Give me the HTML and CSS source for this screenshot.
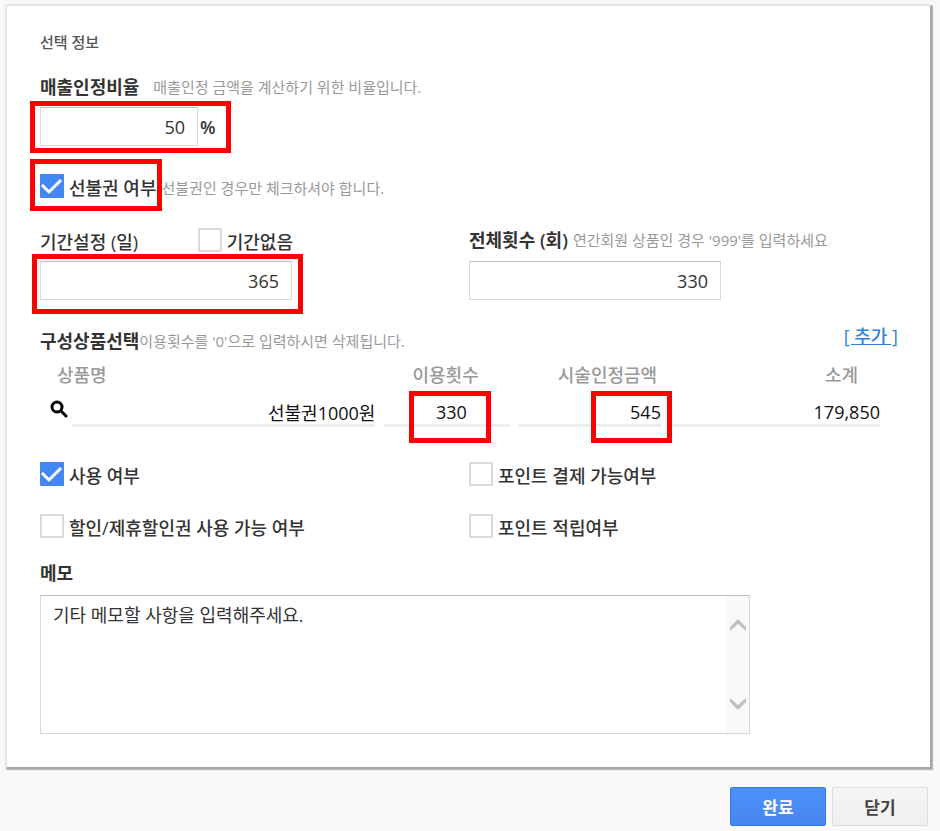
FILE: index.html
```html
<!DOCTYPE html>
<html lang="ko">
<head>
    <meta charset="UTF-8">
    <meta name="viewport" content="width=device-width, initial-scale=1.0">
    <title>선택 정보</title>
    <link rel="stylesheet" href="styles.css">
</head>
<body>
    <form class="panel" id="product-form">
        <h2>선택 정보</h2>

        <div class="label-row">
            <label for="rate">매출인정비율</label>
            <span class="hint hint-spaced">매출인정 금액을 계산하기 위한 비율입니다.</span>
        </div>
        <div class="rate-field mark mark-rate">
            <input type="text" id="rate" class="text-input" value="50">
            <span>%</span>
        </div>

        <div class="check-row">
            <label class="check mark mark-prepaid"><input type="checkbox" checked>선불권 여부</label>
            <span class="hint">선불권인 경우만 체크하셔야 합니다.</span>
        </div>

        <div class="columns">
            <div class="period">
                <div class="label-row period-row">
                    <label for="period">기간설정 (일)</label>
                    <label class="check"><input type="checkbox">기간없음</label>
                </div>
                <div class="period-field mark mark-period">
                    <input type="text" id="period" class="text-input" value="365">
                </div>
            </div>
            <div class="total">
                <div class="label-row">
                    <label for="total">전체횟수 (회)</label>
                    <span class="hint">연간회원 상품인 경우 '999'를 입력하세요</span>
                </div>
                <input type="text" id="total" class="text-input" value="330">
            </div>
        </div>

        <div class="products-head">
            <h3>구성상품선택</h3>
            <span class="hint">이용횟수를 '0'으로 입력하시면 삭제됩니다.</span>
            <a href="#" class="add-link">[ 추가 ]</a>
        </div>
        <table class="products">
            <colgroup>
                <col class="col-name">
                <col class="col-count">
                <col class="col-price">
                <col class="col-sum">
            </colgroup>
            <thead>
                <tr>
                    <th class="th-name">상품명</th>
                    <th class="th-count">이용횟수</th>
                    <th class="th-price">시술인정금액</th>
                    <th class="th-sum">소계</th>
                </tr>
            </thead>
            <tbody>
                <tr>
                    <td>
                        <div class="name-cell">
                            <button type="button" class="search-button" aria-label="상품 검색">
                                <svg viewBox="0 0 18 18" width="18" height="18">
                                    <circle cx="7" cy="7" r="5" fill="none" stroke="#000" stroke-width="3"/>
                                    <path d="M11 11L16 16" stroke="#000" stroke-width="3" stroke-linecap="round"/>
                                </svg>
                            </button>
                            <input type="text" class="line-input" aria-label="상품명" value="선불권1000원">
                        </div>
                    </td>
                    <td>
                        <div class="mark mark-count">
                            <input type="text" class="line-input count-input" aria-label="이용횟수" value="330">
                        </div>
                    </td>
                    <td>
                        <div class="mark mark-price">
                            <input type="text" class="line-input" aria-label="시술인정금액" value="545">
                        </div>
                    </td>
                    <td class="td-sum">
                        <input type="text" class="line-input" aria-label="소계" value="179,850" readonly>
                    </td>
                </tr>
            </tbody>
        </table>

        <div class="options">
            <label class="check"><input type="checkbox" checked>사용 여부</label>
            <label class="check"><input type="checkbox">포인트 결제 가능여부</label>
            <label class="check"><input type="checkbox">할인/제휴할인권 사용 가능 여부</label>
            <label class="check"><input type="checkbox">포인트 적립여부</label>
        </div>

        <div class="label-row">
            <label for="memo">메모</label>
        </div>
        <div class="memo-box">
            <textarea id="memo">기타 메모할 사항을 입력해주세요.</textarea>
            <div class="memo-scroll">
                <svg viewBox="0 0 16 12" width="16" height="12"><path d="M0 8L8 0L16 8V12L8 5L0 12Z" fill="#c1c1c1"/></svg>
                <svg viewBox="0 0 16 12" width="16" height="12"><path d="M0 4L8 12L16 4V0L8 7L0 0Z" fill="#c1c1c1"/></svg>
            </div>
        </div>
    </form>

    <div class="actions">
        <button type="submit" form="product-form" class="button button-primary">완료</button>
        <button type="button" class="button">닫기</button>
    </div>
</body>
</html>
```
FILE: styles.css
```css
* {
    box-sizing: border-box;
}

body {
    margin: 0;
    padding: 5px 8px 0 6px;
    background: #f9f9f9;
    color: #333;
    font-family: "Open Sans", "Noto Sans CJK KR", sans-serif;
    font-size: 18px;
    line-height: 24px;
}

input, textarea, button {
    margin: 0;
    font-family: inherit;
    font-size: 18px;
    color: #333;
}

.panel {
    padding: 24px 32px 33px 33px;
    background: white;
    border: 1px solid #e2e2e2;
    border-right: 2px solid #a8a8a8;
    border-bottom: 2px solid #a8a8a8;
    box-shadow: 0 0 2px rgba(0, 0, 0, 0.2), 1px 1px 1px rgba(0, 0, 0, 0.2);
}

h2 {
    margin: 0 0 21px;
    font-size: 15px;
    font-weight: 500;
    color: #555;
}

h3 {
    margin: 0;
    font-size: 18px;
    font-weight: 600;
}

.label-row {
    display: flex;
    align-items: center;
    gap: 5px;
    height: 24px;
    font-weight: 600;
}

.hint {
    font-size: 15px;
    font-weight: 400;
    color: #999;
}

.hint-spaced {
    padding-left: 9px;
}

.text-input {
    display: block;
    width: 252px;
    height: 39px;
    padding: 0 12px;
    background: white;
    border: 1px solid #d9d9d9;
    border-top-color: #c0c0c0;
    border-radius: 1px;
    text-align: right;
}

.rate-field {
    display: flex;
    align-items: center;
    gap: 2px;
    width: 180px;
    margin-top: 8px;
    font-weight: 600;
}

.rate-field .text-input {
    width: 158px;
}

.period-field {
    width: 252px;
}

/* red guide frames */
.mark {
    position: relative;
}

.mark::after {
    content: "";
    position: absolute;
    border: 5px solid #f00;
    pointer-events: none;
}

.mark-rate::after {
    inset: -6px -11px -7px -10px;
}

.mark-prepaid::after {
    inset: -15px -6px -9px -10px;
}

.mark-period::after {
    inset: -7px -11px -14px -8px;
}

.mark-count::after {
    inset: -5px 19px -16px 25px;
}

.mark-price::after {
    inset: -5px -11px -16px 72px;
}

.check-row {
    display: flex;
    gap: 5px;
    margin-top: 28px;
    line-height: 28px;
}

.check {
    display: flex;
    gap: 5px;
    line-height: 28px;
    font-weight: 500;
}

.check input {
    appearance: none;
    width: 24px;
    height: 24px;
    background: white;
    border: 2px solid #dadada;
    border-radius: 1px;
}

.check input:checked {
    background: #4387f5 url("data:image/svg+xml,%3Csvg xmlns='http://www.w3.org/2000/svg' viewBox='0 0 24 24'%3E%3Cpath d='M2 11L9 18L21 6' fill='none' stroke='white' stroke-width='3'/%3E%3C/svg%3E") center / 24px 24px;
    border: none;
}

.columns {
    display: grid;
    grid-template-columns: 1fr 1fr;
    margin-top: 26px;
}

.columns .label-row {
    margin-bottom: 9px;
}

.period-row {
    align-items: flex-start;
    justify-content: space-between;
    width: 253px;
    line-height: 28px;
    font-weight: 500;
}

.products-head {
    display: flex;
    align-items: center;
    margin-top: 29px;
    margin-bottom: 10px;
}

.add-link {
    margin-left: auto;
    padding-bottom: 10px;
    line-height: 14px;
    font-weight: 500;
    color: #2a83e0;
}

.products {
    width: calc(100% - 18px);
    table-layout: fixed;
    border-collapse: collapse;
}

.col-name {
    width: 41%;
}

.col-count {
    width: 16%;
}

.col-price {
    width: 18%;
}

.col-sum {
    width: 25%;
}

.products th {
    padding: 0 0 9px;
    font-weight: 500;
    color: #999;
    text-align: left;
}

.products .th-name {
    padding-left: 17px;
}

.products .th-count {
    padding-right: 12px;
    text-align: center;
}

.products .th-price {
    padding-left: 39px;
}

.products .th-sum {
    padding-right: 22px;
    text-align: right;
}

.products td {
    padding: 0 9px 0 0;
}

.products .td-sum {
    padding-right: 0;
}

.name-cell {
    display: flex;
    align-items: flex-start;
    padding-left: 10px;
}

.search-button {
    display: block;
    height: 30px;
    padding: 0 4px 0 0;
    border: none;
    background: none;
    cursor: pointer;
}

.line-input {
    display: block;
    flex: 1;
    width: 100%;
    min-width: 0;
    height: 31px;
    padding: 4px 0 0;
    background: none;
    border: none;
    border-bottom: 3px solid #eee;
    color: #111;
    text-align: right;
}

.count-input {
    padding-right: 43px;
}

.options {
    display: grid;
    grid-template-columns: 1fr 1fr;
    row-gap: 24px;
    margin: 35px 0 19px;
}

.memo-box {
    display: flex;
    max-width: 710px;
    height: 139px;
    margin-top: 10px;
    border: 1px solid #d9d9d9;
    border-top-color: #c0c0c0;
}

.memo-box textarea {
    flex: 1;
    padding: 7px 12px;
    border: none;
    resize: none;
    line-height: 24px;
    overflow: hidden;
}

.memo-scroll {
    display: flex;
    flex-direction: column;
    justify-content: space-between;
    align-items: center;
    width: 23px;
    padding: 23px 0;
    background: #f9f9f9;
}

.actions {
    display: flex;
    justify-content: flex-end;
    gap: 6px;
    padding: 18px 4px 5px 0;
}

.button {
    width: 96px;
    height: 39px;
    padding: 0;
    background: linear-gradient(#f5f5f5, #f0f0f0);
    border: 1px solid #dcdcdc;
    border-radius: 2px;
    font-size: 17px;
    font-weight: 600;
    color: #444;
    cursor: pointer;
}

.button-primary {
    background: linear-gradient(#4d90fe, #4787ed);
    border-color: #3079ed;
    color: white;
}
```
